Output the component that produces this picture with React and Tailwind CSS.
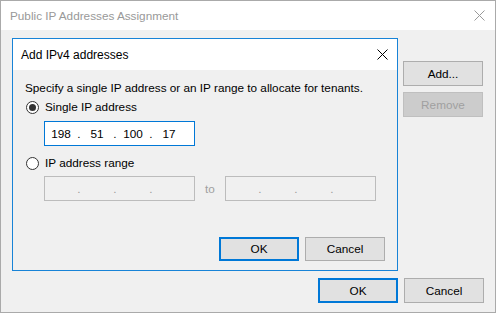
import React from 'react';

const font = { fontFamily: '"Liberation Sans", Arial, sans-serif' };

function CloseIcon({ color }) {
  return (
    <svg width="11" height="11" viewBox="0 0 11 11" className="block">
      <path d="M0.5 0.5 L10.5 10.5 M10.5 0.5 L0.5 10.5" stroke={color} strokeWidth="1" fill="none" />
    </svg>
  );
}

function Radio({ checked }) {
  return (
    <span className="w-[13px] h-[13px] rounded-full border border-[#333333] bg-white flex items-center justify-center shrink-0">
      {checked && <span className="w-[7px] h-[7px] rounded-full bg-[#333333]" />}
    </span>
  );
}

function IpBox({ values, disabled }) {
  const cls = disabled
    ? 'border-[#bcbcbc] bg-[#f0f0f0] text-[#9a9a9a]'
    : 'border-[#0078d7] bg-white text-black';
  return (
    <div className={`w-[151px] h-[25px] border flex items-center pl-[1px] ${cls}`}>
      {values.map((v, i) => (
        <React.Fragment key={i}>
          <span className="w-[30px] text-center">{v}</span>
          {i < 3 && <span className="w-[6px] text-center">.</span>}
        </React.Fragment>
      ))}
    </div>
  );
}

function Button({ children, primary, disabled, className = '' }) {
  let cls = 'border border-[#adadad] bg-[#e1e1e1] text-black';
  if (primary) cls = 'border-2 border-[#0078d7] bg-[#e1e1e1] text-black';
  if (disabled) cls = 'border border-[#bfbfbf] bg-[#cccccc] text-[#a0a0a0]';
  return (
    <div className={`w-[80px] flex items-center justify-center ${cls} ${className}`}>
      {children}
    </div>
  );
}

export default function App() {
  return (
    <div style={font} className="w-[496px] h-[313px] border border-[#aaaaaa] bg-[#f0f0f0] flex flex-col text-[11.75px] overflow-hidden">
      {/* outer window title */}
      <div className="h-[29px] bg-white flex items-center justify-between pl-[9px] pr-[10px] shrink-0">
        <span className="text-[#999999] text-[11.75px]">Public IP Addresses Assignment</span>
        <CloseIcon color="#999999" />
      </div>

      <div className="flex flex-col pt-[8px] pl-[11px] pr-[11px]">
        <div className="flex items-start">
          {/* inner dialog */}
          <div className="w-[386px] h-[233px] border border-[#1883d7] flex flex-col">
            <div className="h-[31px] bg-white flex items-center justify-between pl-[8px] pr-[9px] shrink-0">
              <span className="text-black text-[12px]">Add IPv4 addresses</span>
              <CloseIcon color="#000000" />
            </div>
            <div className="flex flex-col flex-1 pl-[12px] pr-[12px] pt-[10px] text-black">
              <div className="h-[15px] leading-[15px]">
                Specify a single IP address or an IP range to allocate for tenants.
              </div>
              <div className="flex items-center gap-[6px] mt-[3px] h-[18px] pl-[1px]">
                <Radio checked />
                <span>Single IP address</span>
              </div>
              <div className="ml-[19px] mt-[5px]">
                <IpBox values={['198', '51', '100', '17']} />
              </div>
              <div className="flex items-center gap-[6px] mt-[8px] h-[18px] pl-[1px]">
                <Radio />
                <span>IP address range</span>
              </div>
              <div className="ml-[19px] mt-[4px] flex items-center">
                <IpBox values={['', '', '', '']} disabled />
                <span className="w-[30px] text-center text-[#a0a0a0]">to</span>
                <IpBox values={['', '', '', '']} disabled />
              </div>
              <div className="flex justify-end gap-[6px] mt-[36px]">
                <Button primary className="h-[24px]">OK</Button>
                <Button className="h-[24px]">Cancel</Button>
              </div>
            </div>
          </div>

          {/* side buttons */}
          <div className="flex flex-col gap-[6px] ml-[5px] mt-[23px]">
            <Button className="h-[25px]">Add...</Button>
            <Button disabled className="h-[25px]">Remove</Button>
          </div>
        </div>

        <div className="flex justify-end gap-[6px] mt-[7px]">
          <Button primary className="h-[25px]">OK</Button>
          <Button className="h-[25px]">Cancel</Button>
        </div>
      </div>
    </div>
  );
}
